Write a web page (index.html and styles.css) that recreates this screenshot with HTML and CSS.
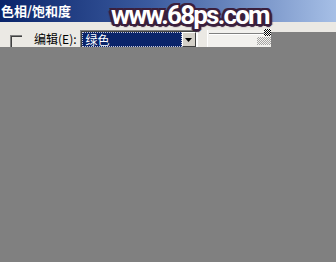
FILE: index.html
```html
<!DOCTYPE html>
<html>
<head>
<meta charset="utf-8">
<link rel="stylesheet" href="styles.css">
</head>
<body>
<div class="window">
  <div class="titlebar"><span class="title">色相/饱和度</span></div>
  <div class="panel">
    <div class="controls">
      <span class="checkbox"></span>
      <span class="label">编辑(<u>E</u>):</span>
      <div class="combo">
        <div class="combo-field"><span class="combo-text">绿色</span></div>
        <div class="combo-btn"><svg width="7" height="4" viewBox="0 0 7 4"><path d="M0 0h7L3.5 4z" fill="#000"/></svg></div>
      </div>
      <div class="slider">
        <div class="track"></div>
        <div class="thumb"></div>
        <div class="dither"></div>
      </div>
    </div>
    <div class="panel-rest"></div>
  </div>
  <div class="watermark">www.68ps.com</div>
</div>
</body>
</html>
```
FILE: styles.css
```css
html, body {
  margin: 0;
  padding: 0;
  background: #808080;
}
.window {
  position: relative;
  width: 336px;
  height: 262px;
  overflow: hidden;
}
.titlebar {
  height: 22px;
  background: linear-gradient(to right, #0a246a 0%, #3b5b9f 45%, #a6bfe6 100%);
  display: flex;
  align-items: center;
  padding-left: 1px;
}
.title {
  color: #fff;
  font: bold 13px "Noto Sans CJK SC", sans-serif;
  line-height: 14px;
}
.panel {
  display: flex;
  align-items: flex-start;
}
.controls {
  width: 271px;
  height: 25px;
  background: #ebe9e4;
  display: flex;
  align-items: flex-start;
  overflow: hidden;
  box-sizing: border-box;
  padding-top: 8px;
}
.panel-rest {
  flex: 1;
  height: 10px;
  background: #ebe9e4;
}
.checkbox {
  width: 11px;
  height: 13px;
  margin: 5px 0 0 10px;
  border-top: 1px solid #808080;
  border-left: 1px solid #808080;
  box-shadow: inset 1px 1px 0 #404040;
  background: #ebe9e4;
}
.label {
  margin: 2px 0 0 12px;
  font: 12px "Noto Sans CJK SC", sans-serif;
  line-height: 14px;
  color: #000;
}
.label u { text-decoration: none; }
.combo {
  margin-left: 3px;
  width: 118px;
  height: 18px;
  box-sizing: border-box;
  border: 1px solid;
  border-color: #808080 #fff #fff #808080;
  box-shadow: inset 1px 1px 0 #404040;
  padding: 1px 1px 0 1px;
  display: flex;
  background: #fff;
}
.combo-field {
  width: 101px;
  height: 15px;
  box-sizing: border-box;
  background: #0a246a;
  outline: 1px dotted #c8c8d8;
  outline-offset: -1px;
  padding-left: 4px;
  display: flex;
  align-items: center;
}
.combo-text {
  color: #fff;
  font: 12px "Noto Sans CJK SC", sans-serif;
  line-height: 13px;
}
.combo-btn {
  width: 14px;
  height: 15px;
  box-sizing: border-box;
  background: #d4d0c8;
  border: 1px solid;
  border-color: #fff #404040 #404040 #fff;
  display: flex;
  align-items: center;
  justify-content: center;
}
.slider {
  position: relative;
  margin-left: 9px;
  flex: 1;
  height: 17px;
  background: #f2f1ee;
  border-left: 1px solid #fff;
}
.track {
  margin: 3px 7px 0 1px;
  height: 0;
  border-top: 1px solid #808080;
  border-bottom: 1px solid #fff;
}
.thumb {
  position: absolute;
  right: 0;
  top: -1px;
  width: 7px;
  height: 7px;
  background:
    repeating-conic-gradient(#000 0 25%, #fff 0 50%) 0 0 / 2px 2px;
}
.dither {
  position: absolute;
  right: 0;
  top: 7px;
  width: 14px;
  height: 8px;
  background:
    repeating-conic-gradient(#555 0 25%, #f2f1ee 0 50%) 0 0 / 2px 2px;
  opacity: 0.5;
}
.watermark {
  position: absolute;
  left: 111px;
  top: 2px;
  font: bold 26px Roboto, sans-serif;
  line-height: 26px;
  letter-spacing: -1.8px;
  color: #fff;
  text-shadow:
    2px 0 0 #3a1f3c, -2px 0 0 #3a1f3c, 0 2px 0 #3a1f3c, 0 -2px 0 #3a1f3c,
    2px 2px 0 #3a1f3c, -2px -2px 0 #3a1f3c, 2px -2px 0 #3a1f3c, -2px 2px 0 #3a1f3c,
    3px 1px 1px #3a1f3c, -3px 1px 1px #3a1f3c, 1px 3px 1px #3a1f3c;
}
```
